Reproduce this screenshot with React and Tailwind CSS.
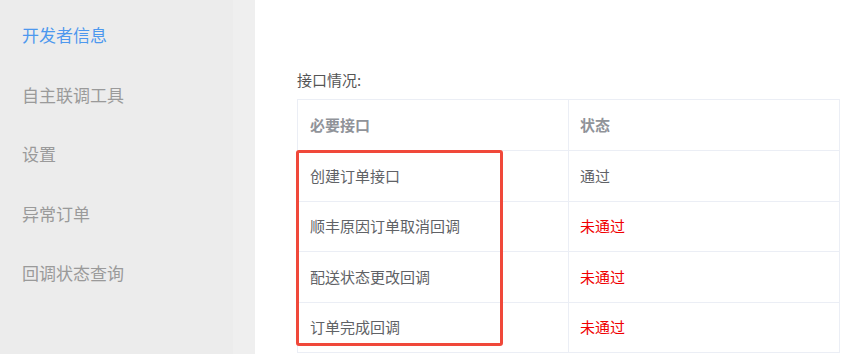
const navItems = ['开发者信息', '自主联调工具', '设置', '异常订单', '回调状态查询'];

const rows = [
  { name: '创建订单接口', status: '通过', ok: true, h: 'h-[50px]' },
  { name: '顺丰原因订单取消回调', status: '未通过', ok: false, h: 'h-[49px]' },
  { name: '配送状态更改回调', status: '未通过', ok: false, h: 'h-[50px]' },
  { name: '订单完成回调', status: '未通过', ok: false, h: 'h-[49px]' },
];

export default function App() {
  return (
    <div className="flex w-[847px] h-[354px] overflow-hidden bg-white font-['Noto_Sans_CJK_SC','Noto_Sans',sans-serif]">
      {/* Sidebar */}
      <div className="flex shrink-0">
        <div className="w-[233px] bg-[#ececec] pt-[5px]">
          {navItems.map((item, i) => (
            <div
              key={item}
              className={`h-[59.5px] flex items-center pl-[22px] text-[17px] ${i === 0 ? 'text-[#4d98ee]' : 'text-[#9a9a9a]'}`}
            >
              {item}
            </div>
          ))}
        </div>
        <div className="w-[22px] bg-[#efefef]" />
      </div>

      {/* Main */}
      <div className="flex-1 pl-[42px] pt-[69px] pr-[7px]">
        <div className="text-[15px] text-[#555] leading-[22px] mb-[8px]">接口情况:</div>
        <div className="relative border-t border-l border-[#ebeef5] text-[15px]">
          <div className="flex h-[51px] border-b border-[#ebeef5] font-bold text-[#909399]">
            <div className="w-[271px] flex items-center pl-[12px] border-r border-[#ebeef5]">必要接口</div>
            <div className="flex-1 flex items-center pl-[11px] border-r border-[#ebeef5]">状态</div>
          </div>
          {rows.map((r) => (
            <div key={r.name} className={`flex ${r.h} border-b border-[#ebeef5] box-content`}>
              <div className="w-[271px] flex items-center pl-[12px] border-r border-[#ebeef5] text-[#606266]">
                {r.name}
              </div>
              <div className={`flex-1 flex items-center pl-[11px] border-r border-[#ebeef5] ${r.ok ? 'text-[#606266]' : 'text-[#f00000]'}`}>
                {r.status}
              </div>
            </div>
          ))}
          {/* annotation box */}
          <div className="absolute left-[-2px] top-[50px] w-[207px] h-[196px] border-[3px] border-[#f0483a] rounded-[3px] pointer-events-none" />
        </div>
      </div>
    </div>
  );
}
